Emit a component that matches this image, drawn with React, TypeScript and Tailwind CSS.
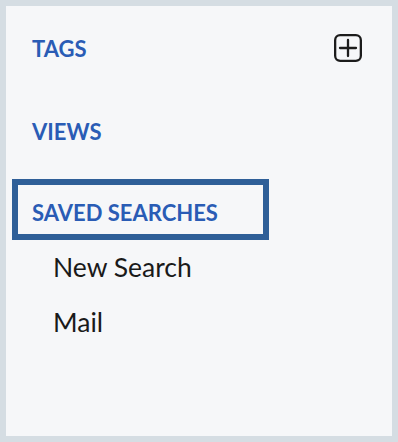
import React from "react";

function PlusSquare() {
  return (
    <svg width="28" height="28" viewBox="0 0 28 28" fill="none" stroke="#1c1c1c" strokeWidth="2.3" strokeLinecap="round">
      <rect x="1.15" y="1.15" width="25.7" height="25.7" rx="5" />
      <path d="M6 14h16M14 6v16" />
    </svg>
  );
}

export default function App() {
  const font = { fontFamily: "Lato, 'Noto Sans', sans-serif" };
  return (
    <div className="h-[442px] w-[398px] bg-[#d5dde3] p-[6px]" style={font}>
      <div className="flex h-full flex-col bg-[#f6f7f9]">
        <div className="flex h-[84px] items-center justify-between pl-[26px] pr-[30px]">
          <span className="text-[22px] font-bold text-[#2a5cb5]">TAGS</span>
          <PlusSquare />
        </div>
        <div className="flex h-[82px] items-center pl-[26px]">
          <span className="text-[22px] font-bold text-[#2a5cb5]">VIEWS</span>
        </div>
        <div className="ml-[6px] mt-[7px] w-[257px] border-[6px] border-[#2f5f98] pb-[7px] pl-[14px] pt-[13px]">
          <span className="block text-[22px] font-bold leading-[29px] text-[#2a5cb5]">SAVED SEARCHES</span>
        </div>
        <div className="flex flex-col pl-[47px] text-[26.5px] text-[#1a1a1a]">
          <div className="flex h-[55px] items-center">New Search</div>
          <div className="flex h-[55px] items-center">Mail</div>
        </div>
      </div>
    </div>
  );
}
